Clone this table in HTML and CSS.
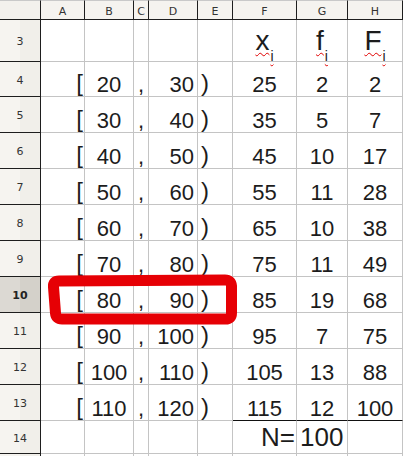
FILE: index.html
```html
<!DOCTYPE html>
<html>
<head>
<meta charset="utf-8">
<link rel="stylesheet" href="styles.css">
</head>
<body>
<div class="wrap">
<div class="sheet">
  <div class="ch corner"></div><div class="ch">A</div><div class="ch">B</div><div class="ch">C</div><div class="ch">D</div><div class="ch">E</div><div class="ch">F</div><div class="ch">G</div><div class="ch">H</div>

  <div class="rh">3</div><div class="c"></div><div class="c"></div><div class="c"></div><div class="c"></div><div class="c"></div>
  <div class="c hd"><span class="v">x</span><span class="s">i</span></div>
  <div class="c hd"><span class="v">f</span><span class="s">i</span></div>
  <div class="c hd"><span class="v">F</span><span class="s">i</span></div>

  <div class="rh">4</div><div class="c br">[</div><div class="c n">20</div><div class="c cm">,</div><div class="c nr">30</div><div class="c pr">)</div><div class="c n">25</div><div class="c n">2</div><div class="c n">2</div>
  <div class="rh">5</div><div class="c br">[</div><div class="c n">30</div><div class="c cm">,</div><div class="c nr">40</div><div class="c pr">)</div><div class="c n">35</div><div class="c n">5</div><div class="c n">7</div>
  <div class="rh">6</div><div class="c br">[</div><div class="c n">40</div><div class="c cm">,</div><div class="c nr">50</div><div class="c pr">)</div><div class="c n">45</div><div class="c n">10</div><div class="c n">17</div>
  <div class="rh">7</div><div class="c br">[</div><div class="c n">50</div><div class="c cm">,</div><div class="c nr">60</div><div class="c pr">)</div><div class="c n">55</div><div class="c n">11</div><div class="c n">28</div>
  <div class="rh">8</div><div class="c br">[</div><div class="c n">60</div><div class="c cm">,</div><div class="c nr">70</div><div class="c pr">)</div><div class="c n">65</div><div class="c n">10</div><div class="c n">38</div>
  <div class="rh">9</div><div class="c br">[</div><div class="c n">70</div><div class="c cm">,</div><div class="c nr">80</div><div class="c pr">)</div><div class="c n">75</div><div class="c n">11</div><div class="c n">49</div>
  <div class="rh active">10</div><div class="c br">[</div><div class="c n">80</div><div class="c cm">,</div><div class="c nr">90</div><div class="c pr">)</div><div class="c n">85</div><div class="c n">19</div><div class="c n">68</div>
  <div class="rh">11</div><div class="c br">[</div><div class="c n">90</div><div class="c cm">,</div><div class="c nr">100</div><div class="c pr">)</div><div class="c n">95</div><div class="c n">7</div><div class="c n">75</div>
  <div class="rh">12</div><div class="c br">[</div><div class="c n">100</div><div class="c cm">,</div><div class="c nr">110</div><div class="c pr">)</div><div class="c n">105</div><div class="c n">13</div><div class="c n">88</div>
  <div class="rh">13</div><div class="c br">[</div><div class="c n">110</div><div class="c cm">,</div><div class="c nr">120</div><div class="c pr">)</div><div class="c n tb">115</div><div class="c n tb">12</div><div class="c n tb">100</div>

  <div class="rh">14</div><div class="c"></div><div class="c"></div><div class="c"></div><div class="c"></div><div class="c"></div><div class="c big right">N=</div><div class="c big left">100</div><div class="c"></div>

  <div class="rh"></div><div class="c"></div><div class="c"></div><div class="c"></div><div class="c"></div><div class="c"></div><div class="c"></div><div class="c"></div><div class="c"></div>
</div>
<svg class="mark" width="403" height="456" viewBox="0 0 403 456">
  <path d="M59 281 L225 280 Q231 280 231.5 286 L231.5 313 Q231.5 319 225.5 319 L62 319 Q56 319 55.5 313 L53.5 287 Q53 281 59 281 Z" fill="none" stroke="#e60005" stroke-width="11" stroke-linejoin="round"/>
</svg>
</div>
</body>
</html>
```

FILE: styles.css
```css
html, body {
  margin: 0;
  padding: 0;
  background: #ffffff;
}

.wrap {
  position: relative;
  width: 403px;
  height: 456px;
  overflow: hidden;
}

.sheet {
  display: grid;
  grid-template-columns: 41px 44px 49px 15px 49px 35px 64px 51px 55px;
  grid-template-rows: 20px 42px 35px repeat(9, 36px) 33px 20px;
  font-family: "Liberation Sans", Arial, sans-serif;
  color: #1c1c1c;
}

.ch {
  box-sizing: border-box;
  background: #f5f3ef;
  border-top: 1px solid #c9c9c9;
  border-right: 1px solid #1e1e1e;
  border-bottom: 1px solid #1e1e1e;
  font-family: "DejaVu Sans", sans-serif;
  font-size: 11px;
  color: #333333;
  display: flex;
  align-items: center;
  justify-content: center;
  padding-top: 2px;
}

.ch.corner {
  background: #f3f1ed;
}

.rh {
  box-sizing: border-box;
  background: linear-gradient(to right, #f6f4f0 0, #f6f4f0 50%, #f1efea 50%, #f1efea 100%);
  border-right: 1px solid #1e1e1e;
  border-bottom: 1px solid #1e1e1e;
  font-family: "DejaVu Sans", sans-serif;
  font-size: 11px;
  color: #333333;
  display: flex;
  align-items: center;
  justify-content: center;
  padding-top: 2px;
}

.rh.active {
  background: linear-gradient(to right, #dcd9d3 0, #dcd9d3 50%, #d4d1ca 50%, #d4d1ca 100%);
  font-weight: bold;
  color: #222222;
}

.c {
  box-sizing: border-box;
  border-right: 1px solid #c4c4c4;
  border-bottom: 1px solid #c4c4c4;
  display: flex;
  align-items: flex-end;
  justify-content: center;
  font-size: 22px;
  line-height: 22px;
  white-space: nowrap;
  overflow: visible;
}

.n {
  justify-content: center;
}

.nr {
  justify-content: flex-end;
  padding-right: 3px;
}

.cm {
  justify-content: center;
}

.br {
  justify-content: flex-end;
  font-size: 24px;
  line-height: 24px;
  padding-right: 1px;
  padding-bottom: 1px;
}

.pr {
  justify-content: flex-start;
  font-size: 24px;
  line-height: 24px;
  padding-left: 3px;
  padding-bottom: 1px;
}

.tb {
  border-bottom: 1px solid #111111;
}

.hd {
  align-items: flex-end;
  padding-bottom: 6px;
}

.v {
  font-size: 28px;
  line-height: 28px;
  text-decoration: underline wavy #e00000;
  text-decoration-thickness: 1px;
  text-underline-offset: 2px;
}

.s {
  font-size: 14px;
  line-height: 14px;
  position: relative;
  top: 8px;
  margin-left: 1px;
  text-decoration: underline wavy #e00000;
  text-decoration-thickness: 1px;
  text-underline-offset: 1px;
}

.big {
  font-size: 26px;
  line-height: 26px;
  padding-bottom: 3px;
}

.right {
  justify-content: flex-end;
  padding-right: 1px;
}

.left {
  justify-content: flex-start;
  padding-left: 3px;
}

.mark {
  position: absolute;
  left: 0;
  top: 0;
  pointer-events: none;
}
```
